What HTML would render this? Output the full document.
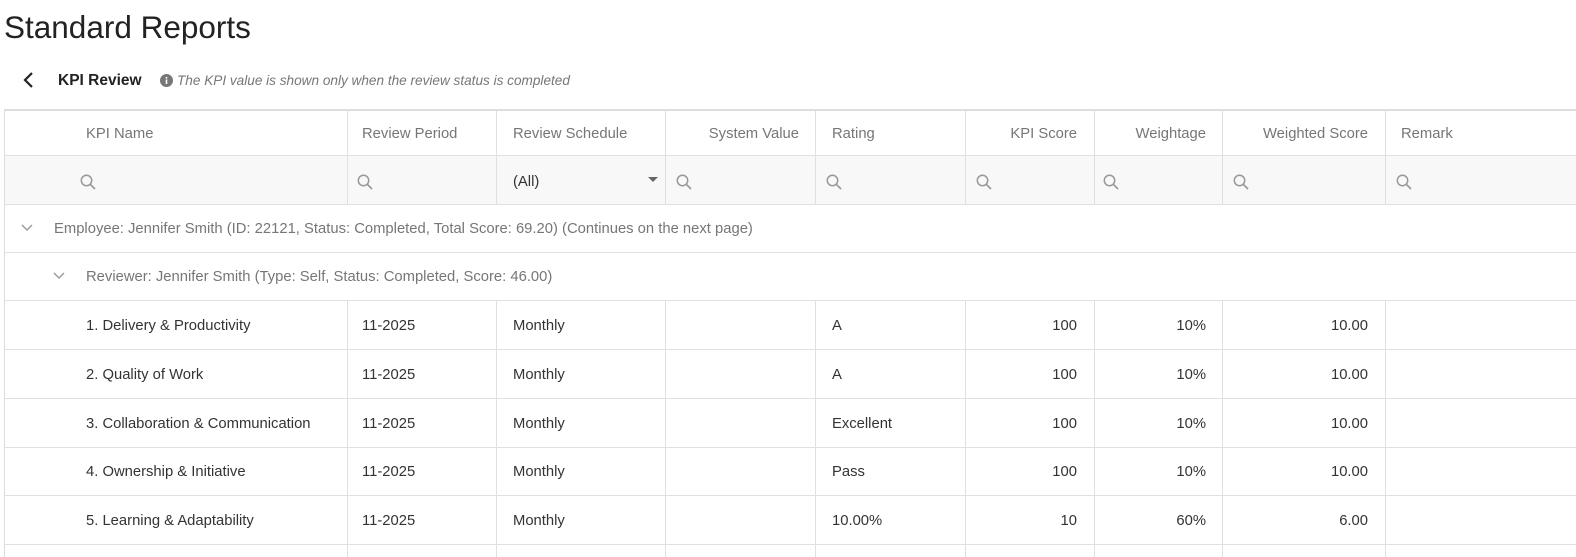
<!DOCTYPE html>
<html><head><meta charset="utf-8"><style>
*{box-sizing:border-box;margin:0;padding:0}
body{width:1576px;height:557px;background:#fff;font-family:"Liberation Sans",sans-serif;color:#333;position:relative;overflow:hidden}
.a{position:absolute;white-space:nowrap}
.h{color:#767676;font-size:14.8px}
.d{color:#333;font-size:14.8px}
.hl{position:absolute;left:5px;right:0;height:1px;background:#e0e0e0}
.vl{position:absolute;width:1px;background:#e0e0e0}
.r{text-align:right}
</style></head><body>
<div class="a" style="left:4px;top:9px;font-size:31.5px;color:#222">Standard Reports</div>
<svg class="a" style="left:22px;top:71px" width="14" height="18" viewBox="0 0 14 18"><path d="M10 2 L3 9 L10 16" fill="none" stroke="#222" stroke-width="2.2"/></svg>
<div class="a" style="left:58px;top:72px;font-size:15.5px;font-weight:bold;color:#222">KPI Review</div>
<svg class="a" style="left:160px;top:74px" width="13" height="13" viewBox="0 0 13 13"><circle cx="6.5" cy="6.5" r="6.5" fill="#777"/><rect x="5.7" y="5.5" width="1.6" height="4.5" fill="#fff"/><rect x="5.7" y="3" width="1.6" height="1.6" fill="#fff"/></svg>
<div class="a" style="left:177px;top:73px;font-size:13.6px;font-style:italic;color:#777">The KPI value is shown only when the review status is completed</div>

<div style="position:absolute;left:4px;top:109px;right:0;height:2px;background:#ddd"></div>
<div style="position:absolute;left:4px;top:109px;width:1px;height:448px;background:#ddd"></div>
<div style="position:absolute;left:5px;top:155px;right:0;height:49px;background:#f8f8f8"></div>
<div class="hl" style="top:155px"></div>
<div class="hl" style="top:204px"></div>
<div class="hl" style="top:252px"></div>
<div class="hl" style="top:300px"></div>
<div class="hl" style="top:349px"></div>
<div class="hl" style="top:398px"></div>
<div class="hl" style="top:447px"></div>
<div class="hl" style="top:495px"></div>
<div class="hl" style="top:544px"></div>

<div class="vl" style="left:347px;top:111px;height:93px"></div>
<div class="vl" style="left:496px;top:111px;height:93px"></div>
<div class="vl" style="left:665px;top:111px;height:93px"></div>
<div class="vl" style="left:815px;top:111px;height:93px"></div>
<div class="vl" style="left:965px;top:111px;height:93px"></div>
<div class="vl" style="left:1094px;top:111px;height:93px"></div>
<div class="vl" style="left:1222px;top:111px;height:93px"></div>
<div class="vl" style="left:1385px;top:111px;height:93px"></div>
<div class="vl" style="left:347px;top:301px;height:256px"></div>
<div class="vl" style="left:496px;top:301px;height:256px"></div>
<div class="vl" style="left:665px;top:301px;height:256px"></div>
<div class="vl" style="left:815px;top:301px;height:256px"></div>
<div class="vl" style="left:965px;top:301px;height:256px"></div>
<div class="vl" style="left:1094px;top:301px;height:256px"></div>
<div class="vl" style="left:1222px;top:301px;height:256px"></div>
<div class="vl" style="left:1385px;top:301px;height:256px"></div>

<div class="a h" style="left:86px;top:126px">KPI Name</div>
<div class="a h" style="left:362px;top:126px">Review Period</div>
<div class="a h" style="left:513px;top:126px">Review Schedule</div>
<div class="a h r" style="left:665px;width:134px;top:126px">System Value</div>
<div class="a h" style="left:832px;top:126px">Rating</div>
<div class="a h r" style="left:965px;width:112px;top:126px">KPI Score</div>
<div class="a h r" style="left:1094px;width:112px;top:126px">Weightage</div>
<div class="a h r" style="left:1222px;width:146px;top:126px">Weighted Score</div>
<div class="a h" style="left:1401px;top:126px">Remark</div>

<svg width="0" height="0" style="position:absolute"><defs><g id="s"><circle cx="6.5" cy="6.5" r="5.2" fill="none" stroke="#999" stroke-width="1.5"/><path d="M10.3 10.3 L15 15" stroke="#999" stroke-width="1.7"/></g></defs></svg>
<svg class="a" style="left:80px;top:174px" width="17" height="17"><use href="#s"/></svg>
<svg class="a" style="left:357px;top:174px" width="17" height="17"><use href="#s"/></svg>
<div class="a d" style="left:513px;top:174px">(All)</div>
<svg class="a" style="left:648px;top:177px" width="10" height="6"><path d="M0 0 L10 0 L5 5 Z" fill="#666"/></svg>
<svg class="a" style="left:676px;top:174px" width="17" height="17"><use href="#s"/></svg>
<svg class="a" style="left:826px;top:174px" width="17" height="17"><use href="#s"/></svg>
<svg class="a" style="left:976px;top:174px" width="17" height="17"><use href="#s"/></svg>
<svg class="a" style="left:1103px;top:174px" width="17" height="17"><use href="#s"/></svg>
<svg class="a" style="left:1233px;top:174px" width="17" height="17"><use href="#s"/></svg>
<svg class="a" style="left:1396px;top:174px" width="17" height="17"><use href="#s"/></svg>

<svg class="a" style="left:21px;top:224px" width="12" height="8"><path d="M1 1 L6 6 L11 1" fill="none" stroke="#999" stroke-width="1.4"/></svg>
<div class="a h" style="left:54px;top:221px">Employee: Jennifer Smith (ID: 22121, Status: Completed, Total Score: 69.20) (Continues on the next page)</div>
<svg class="a" style="left:53px;top:272px" width="12" height="8"><path d="M1 1 L6 6 L11 1" fill="none" stroke="#999" stroke-width="1.4"/></svg>
<div class="a h" style="left:86px;top:269px">Reviewer: Jennifer Smith (Type: Self, Status: Completed, Score: 46.00)</div>

<div class="a d" style="left:86px;top:318px">1. Delivery &amp; Productivity</div>
<div class="a d" style="left:362px;top:318px">11-2025</div>
<div class="a d" style="left:513px;top:318px">Monthly</div>
<div class="a d" style="left:832px;top:318px">A</div>
<div class="a d r" style="left:965px;width:112px;top:318px">100</div>
<div class="a d r" style="left:1094px;width:112px;top:318px">10%</div>
<div class="a d r" style="left:1222px;width:146px;top:318px">10.00</div>

<div class="a d" style="left:86px;top:367px">2. Quality of Work</div>
<div class="a d" style="left:362px;top:367px">11-2025</div>
<div class="a d" style="left:513px;top:367px">Monthly</div>
<div class="a d" style="left:832px;top:367px">A</div>
<div class="a d r" style="left:965px;width:112px;top:367px">100</div>
<div class="a d r" style="left:1094px;width:112px;top:367px">10%</div>
<div class="a d r" style="left:1222px;width:146px;top:367px">10.00</div>

<div class="a d" style="left:86px;top:416px">3. Collaboration &amp; Communication</div>
<div class="a d" style="left:362px;top:416px">11-2025</div>
<div class="a d" style="left:513px;top:416px">Monthly</div>
<div class="a d" style="left:832px;top:416px">Excellent</div>
<div class="a d r" style="left:965px;width:112px;top:416px">100</div>
<div class="a d r" style="left:1094px;width:112px;top:416px">10%</div>
<div class="a d r" style="left:1222px;width:146px;top:416px">10.00</div>

<div class="a d" style="left:86px;top:464px">4. Ownership &amp; Initiative</div>
<div class="a d" style="left:362px;top:464px">11-2025</div>
<div class="a d" style="left:513px;top:464px">Monthly</div>
<div class="a d" style="left:832px;top:464px">Pass</div>
<div class="a d r" style="left:965px;width:112px;top:464px">100</div>
<div class="a d r" style="left:1094px;width:112px;top:464px">10%</div>
<div class="a d r" style="left:1222px;width:146px;top:464px">10.00</div>

<div class="a d" style="left:86px;top:513px">5. Learning &amp; Adaptability</div>
<div class="a d" style="left:362px;top:513px">11-2025</div>
<div class="a d" style="left:513px;top:513px">Monthly</div>
<div class="a d" style="left:832px;top:513px">10.00%</div>
<div class="a d r" style="left:965px;width:112px;top:513px">10</div>
<div class="a d r" style="left:1094px;width:112px;top:513px">60%</div>
<div class="a d r" style="left:1222px;width:146px;top:513px">6.00</div>
</body></html>
